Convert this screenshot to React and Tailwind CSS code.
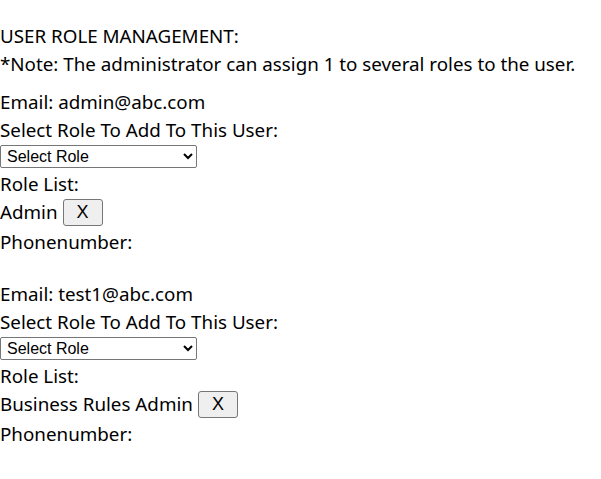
import React from 'react';

const users = [
  { email: 'admin@abc.com', roles: ['Admin'] },
  { email: 'test1@abc.com', roles: ['Business Rules Admin'] },
];

const UserBlock = ({ user }) => (
  <div className="mb-[24px]">
    <div className="h-[28px]">Email: {user.email}</div>
    <div className="h-[28px]">Select Role To Add To This User:</div>
    <select className="block mt-[1px] w-[197px] h-[23px] border border-[#767676] rounded-[2px] bg-white text-[16px] leading-[20px] text-black pl-[2px] font-['Liberation_Sans',Arial,sans-serif]">
      <option>Select Role</option>
    </select>
    <div className="h-[28px] mt-[2px]">Role List:</div>
    {user.roles.map((role) => (
      <div key={role} className="h-[28px] flex items-center gap-[5px]">
        <span>{role}</span>
        <button className="w-[40px] h-[27px] border border-[#767676] rounded-[3px] bg-[#efefef] text-[18px] leading-none font-['Liberation_Sans',Arial,sans-serif]">
          X
        </button>
      </div>
    ))}
    <div className="h-[28px] mt-[2px]">Phonenumber:</div>
  </div>
);

export default function App() {
  return (
    <div className="pt-[22px] text-[18.8px] leading-[28px] text-black font-['Noto_Sans',sans-serif]">
      <div className="h-[28px]">USER ROLE MANAGEMENT:</div>
      <div className="h-[28px]">*Note: The administrator can assign 1 to several roles to the user.</div>
      <div className="mt-[10px]">
        {users.map((u) => (
          <UserBlock key={u.email} user={u} />
        ))}
      </div>
    </div>
  );
}
